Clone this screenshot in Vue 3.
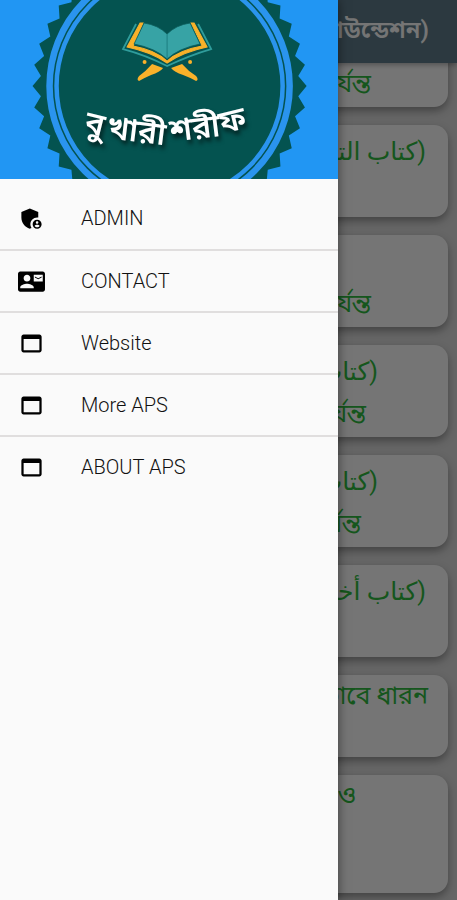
<template>
  <div class="screen">
    <header class="toolbar">
      <h1>সহীহ বুখারী (ইসলামিক ফাউন্ডেশন)</h1>
    </header>

    <main class="list">
      <article v-for="(card, i) in cards" :key="i" class="card">
        <p
          v-for="(line, j) in card"
          :key="j"
          :class="line.ar ? 'arabic' : 'bangla'"
          :dir="line.ar ? 'rtl' : 'ltr'"
          :style="{ paddingRight: line.end + 'px' }"
        >{{ line.text }}</p>
      </article>
    </main>

    <div class="backdrop"></div>

    <aside class="drawer">
      <div class="banner">
        <svg class="logo" viewBox="0 0 338 179" role="img" aria-label="বুখারী শরীফ">
          <polygon :points="badge" fill="#045350" />
          <circle cx="169.5" cy="86" r="120" fill="none" stroke="#2a94ee" stroke-width="6.5" />
          <circle cx="169.5" cy="86" r="113" fill="none" stroke="#2a94ee" stroke-width="4.5" />
          <!-- rehal stand -->
          <path d="M152 64 L163 68 Q160 72 151 75 Q144 78 139 81 Q136 80 139 76 Q146 71 152 64Z" fill="#f9b12a" />
          <path d="M182 64 L171 68 Q174 72 183 75 Q191 78 196 81 Q199 80 196 76 Q188 71 182 64Z" fill="#f9b12a" />
          <circle cx="144.5" cy="62" r="2" fill="#f9b12a" />
          <circle cx="190" cy="62" r="2" fill="#f9b12a" />
          <!-- book -->
          <path d="M136 24 L123 49 Q146 55 167 66 Q190 55 211 49 L198 24" fill="none" stroke="#2f9c9b" stroke-width="1.8" />
          <path d="M140 23 L143 23 L133 46 Q155 50 167 61 Q179 50 202 46 L191 23 L194 23 L207 47 Q183 52 167 63 Q151 52 127 47Z" fill="#f9b12a" stroke="#f9b12a" />
          <path d="M144 23 Q158 25 167 34 Q176 25 190 23 L200 44 Q179 48 167 59 Q155 48 134 44Z" fill="#37a3a5" stroke="#0b5d5b" stroke-width="0.8" />
          <path d="M167 34 V59" stroke="#1c7f80" stroke-width="1" />
          <g class="name">
            <text x="83" y="132" transform="rotate(14 83 132)">বু</text>
            <text x="106" y="138" transform="rotate(7 106 138)">খারী</text>
            <text x="171" y="142" transform="rotate(-7 171 142)">শরী</text>
            <text x="222" y="134" transform="rotate(-14 222 134)">ফ</text>
          </g>
        </svg>
      </div>
      <nav>
        <a v-for="item in menu" :key="item.label" href="#" class="item">
          <svg class="icon" viewBox="0 0 24 24" aria-hidden="true">
            <path :d="icons[item.icon]" fill-rule="evenodd" />
          </svg>
          <span>{{ item.label }}</span>
        </a>
      </nav>
    </aside>
  </div>
</template>

<script setup>
const menu = [
  { label: 'ADMIN', icon: 'admin' },
  { label: 'CONTACT', icon: 'contact' },
  { label: 'Website', icon: 'web' },
  { label: 'More APS', icon: 'web' },
  { label: 'ABOUT APS', icon: 'web' },
]

const icons = {
  admin: 'M17 11c.34 0 .67.04 1 .09V6.270L10.500 3 3 6.270v4.910c0 4.540 3.200 8.790 7.500 9.820.55-.13 1.080-.32 1.600-.55C11.410 19.470 11 18.280 11 17c0-3.310 2.690-6 6-6z M17 13c-2.210 0-4 1.790-4 4s1.790 4 4 4 4-1.790 4-4-1.790-4-4-4z M17 14.380c.62 0 1.120.51 1.120 1.120s-.51 1.120-1.120 1.120-1.120-.51-1.120-1.120.5-1.120 1.120-1.120z M17 19.750c-.93 0-1.740-.46-2.240-1.170.05-.72 1.510-1.080 2.240-1.080s2.190.36 2.240 1.080c-.5.71-1.310 1.170-2.240 1.170z',
  contact: 'M22 3H2C.9 3 0 3.900 0 5v14c0 1.100.9 2 2 2h20c1.100 0 1.990-.9 1.990-2L24 5c0-1.100-.9-2-2-2z M8 6c1.660 0 3 1.340 3 3s-1.340 3-3 3-3-1.340-3-3 1.340-3 3-3z M14 18H2v-1c0-2 4-3.100 6-3.100s6 1.100 6 3.100v1z M22 12h-8V6h8v6z M21 7.500l-3 1.500-3-1.500v1l3 1.500 3-1.500z',
  web: 'M19 4H5c-1.110 0-2 .9-2 2v12c0 1.100.89 2 2 2h14c1.100 0 2-.9 2-2V6c0-1.100-.89-2-2-2z M19 18H5V8h14v10z',
}

// end: distance from the right side of the card to the end of the line
const cards = [
  [{ text: '', ar: true, end: 22 }, { text: 'হাদিস নং পর্যন্ত', end: 77 }],
  [{ text: '(كتاب التمني)', ar: true, end: 22 }],
  [{ text: '', ar: true, end: 22 }, { text: 'হাদিস নং পর্যন্ত', end: 77 }],
  [{ text: '(كتاب الحيل)', ar: true, end: 70 }, { text: 'হাদিস নং পর্যন্ত', end: 82 }],
  [{ text: '(كتاب الديات)', ar: true, end: 70 }, { text: 'হাদিস নং পর্যন্ত', end: 87 }],
  [{ text: '(كتاب أخبار الآحاد)', ar: true, end: 22 }],
  [{ text: 'দৃঢ়ভাবে ধারন', end: 20 }],
  [{ text: 'আল্লাহ্ ও', end: 92 }],
]

// scalloped outline of the badge, 40 teeth
const badge = Array.from({ length: 80 }, (_, k) => {
  const r = k % 2 ? 129 : 137
  const a = (k * Math.PI) / 40
  return `${(169.5 + r * Math.cos(a)).toFixed(1)},${(86 + r * Math.sin(a)).toFixed(1)}`
}).join(' ')
</script>

<style>
body {
  margin: 0;
  background: #dedede;
}
</style>

<style scoped>
.screen {
  position: relative;
  min-height: 100vh;
  overflow: hidden;
  font-family: Roboto, "Noto Sans", "Noto Sans Bengali", "DejaVu Sans", sans-serif;
}

.toolbar {
  position: absolute;
  top: 0;
  left: 0;
  right: 0;
  display: flex;
  justify-content: flex-end;
  align-items: center;
  height: 63px;
  padding-right: 28px;
  background: #607d8b;
  box-shadow: 0 2px 5px rgba(0, 0, 0, 0.3);
}

.toolbar h1 {
  margin: 0;
  color: #fff;
  font-size: 24px;
  font-weight: 600;
  white-space: nowrap;
}

.list {
  display: flex;
  flex-direction: column;
  gap: 18px;
  padding: 15px 9px 8px;
}

.card {
  box-sizing: border-box;
  min-height: 92px;
  padding: 3px 0;
  border-radius: 14px;
  background: #fff;
  box-shadow: 0 4px 9px rgba(0, 0, 0, 0.35);
}

.card:nth-child(7) {
  min-height: 82px;
}

.card:nth-child(8) {
  min-height: 118px;
}

.card p {
  margin: 0;
  color: #2fbc40;
  font-size: 25px;
  text-align: right;
  white-space: nowrap;
}

.card .arabic {
  height: 48px;
  line-height: 48px;
}

.card .bangla {
  height: 36px;
  line-height: 36px;
}

.backdrop {
  position: absolute;
  inset: 0;
  background: rgba(0, 0, 0, 0.54);
}

.drawer {
  position: absolute;
  top: 0;
  bottom: 0;
  left: 0;
  width: 74%;
  background: #fafafa;
  box-shadow: 0 0 10px rgba(0, 0, 0, 0.5);
}

.banner {
  background: #2196f3;
}

.logo {
  display: block;
  width: 100%;
}

.name {
  fill: #fff;
  font-size: 32px;
  font-weight: 600;
  filter: drop-shadow(2px 4px 2px rgba(0, 0, 0, 0.6));
}

.item {
  display: flex;
  align-items: center;
  gap: 36px;
  box-sizing: border-box;
  height: 62px;
  padding: 0 18px;
  color: #111;
  font-size: 20px;
  font-weight: 300;
  text-decoration: none;
}

.item:first-child {
  height: 70px;
  padding-top: 8px;
}

.item + .item {
  border-top: 2px solid #e0dede;
}

.icon {
  width: 27px;
  height: 27px;
  fill: #000;
}
</style>
